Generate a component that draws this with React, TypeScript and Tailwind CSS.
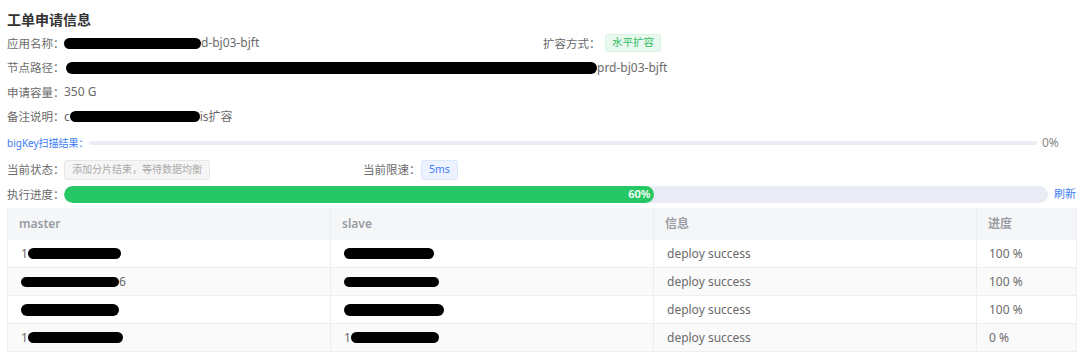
const font = { fontFamily: '"Noto Sans", "Noto Sans CJK SC", sans-serif' };

function Redact({ w, h = 10, className = "" }: { w: number; h?: number; className?: string }) {
  return <span className={`inline-block bg-black rounded-full align-middle ${className}`} style={{ width: w, height: h }} />;
}

function InfoRow({ label, children }: { label: string; children: React.ReactNode }) {
  return (
    <div className="flex items-center h-[24.5px] text-[12px] text-[#6a6a6a]">
      <span className="w-[57px] text-[11.5px] whitespace-nowrap">{label}</span>
      <div className="flex items-center">{children}</div>
    </div>
  );
}

type Row = { master: React.ReactNode; slave: React.ReactNode; info: string; pct: string };

const rows: Row[] = [
  {
    master: (<><span>1</span><Redact w={93} h={11} /></>),
    slave: (<><Redact w={90} h={11} /></>),
    info: "deploy success",
    pct: "100 %",
  },
  {
    master: (<><Redact w={98} h={10} /><span>6</span></>),
    slave: (<><Redact w={95} h={10} /></>),
    info: "deploy success",
    pct: "100 %",
  },
  {
    master: (<><Redact w={98} h={12} /></>),
    slave: (<><Redact w={100} h={12} /></>),
    info: "deploy success",
    pct: "100 %",
  },
  {
    master: (<><span>1</span><Redact w={95} h={11} /></>),
    slave: (<><span>1</span><Redact w={88} h={11} /></>),
    info: "deploy success",
    pct: "0 %",
  },
];

export default function App() {
  return (
    <div className="w-[1080px] h-[355px] bg-white overflow-hidden pt-[8px] pl-[7px] pr-[3px]" style={font}>
      <h1 className="text-[14px] font-bold leading-[23px] text-[#333]">工单申请信息</h1>

      <div className="flex items-center">
        <div className="w-[536px]">
          <InfoRow label="应用名称：">
            <Redact w={137} h={11} />
            <span>d-bj03-bjft</span>
          </InfoRow>
        </div>
        <div className="flex items-center text-[11.5px] text-[#6a6a6a]">
          <span className="w-[62px] whitespace-nowrap">扩容方式：</span>
          <span className="px-[6px] h-[18px] flex items-center rounded-[3px] bg-[#e8f8ee] border border-[#d8f3e2] text-[#2fbf64] text-[10.5px]">
            水平扩容
          </span>
        </div>
      </div>
      <InfoRow label="节点路径：">
        <span className="w-[2px]" />
        <Redact w={531} h={12} />
        <span>prd-bj03-bjft</span>
      </InfoRow>
      <InfoRow label="申请容量：">
        <span>350 G</span>
      </InfoRow>
      <InfoRow label="备注说明：">
        <span>c</span>
        <Redact w={130} h={11} />
        <span>is扩容</span>
      </InfoRow>

      <div className="flex items-center h-[28px]">
        <span className="text-[10px] text-[#3b7cf6] whitespace-nowrap">bigKey扫描结果：</span>
        <div className="flex-1 h-[4px] rounded-full bg-[#e9ecf3]" />
        <span className="w-[40px] pl-[5px] text-[12px] text-[#888]">0%</span>
      </div>

      <div className="flex items-center h-[25px] text-[11.5px] text-[#6a6a6a]">
        <div className="w-[356px] flex items-center">
          <span className="w-[57px] whitespace-nowrap">当前状态：</span>
          <span className="h-[20px] px-[7px] flex items-center rounded-[3px] bg-[#f5f5f5] border border-[#e8e8e8] text-[#aaa] text-[10px]">
            添加分片结束，等待数据均衡
          </span>
        </div>
        <span className="w-[58px] whitespace-nowrap">当前限速：</span>
        <span className="h-[20px] px-[7px] flex items-center rounded-[3px] bg-[#ecf2ff] border border-[#dde7fb] text-[#3b7cf6] text-[10.5px]">
          5ms
        </span>
      </div>

      <div className="flex items-center h-[25px] text-[11.5px] text-[#6a6a6a]">
        <span className="w-[57px] whitespace-nowrap">执行进度：</span>
        <div className="flex-1 h-[17px] rounded-full bg-[#e9ecf4] overflow-hidden">
          <div className="h-full rounded-full bg-[#26c765] flex items-center justify-end pr-[4px]" style={{ width: "60%" }}>
            <span className="text-white text-[11px] font-semibold">60%</span>
          </div>
        </div>
        <span className="w-[29px] pl-[6px] text-[11px] text-[#3b7cf6] whitespace-nowrap">刷新</span>
      </div>

      <div className="mt-[1px] w-[1070px] border-l border-r border-[#ebeef5]">
        <div className="grid grid-cols-[323px_323px_323px_1fr] h-[32px] bg-[#f5f6f8] text-[12px] font-semibold text-[#9a9ca3]">
          <div className="flex items-center pl-[11px] border-r border-[#ebeef5]">master</div>
          <div className="flex items-center pl-[11px] border-r border-[#ebeef5]">slave</div>
          <div className="flex items-center pl-[11px] border-r border-[#ebeef5]">信息</div>
          <div className="flex items-center pl-[11px]">进度</div>
        </div>
        {rows.map((r, i) => (
          <div
            key={i}
            className={`grid grid-cols-[323px_323px_323px_1fr] h-[28px] text-[12px] text-[#6a6a6a] border-b border-[#ebeef5] ${i % 2 === 1 ? "bg-[#fafafa]" : "bg-white"}`}
          >
            <div className="flex items-center pl-[13px] border-r border-[#ebeef5]">{r.master}</div>
            <div className="flex items-center pl-[13px] border-r border-[#ebeef5]">{r.slave}</div>
            <div className="flex items-center pl-[13px] border-r border-[#ebeef5]">{r.info}</div>
            <div className="flex items-center pl-[12px]">{r.pct}</div>
          </div>
        ))}
      </div>
    </div>
  );
}
